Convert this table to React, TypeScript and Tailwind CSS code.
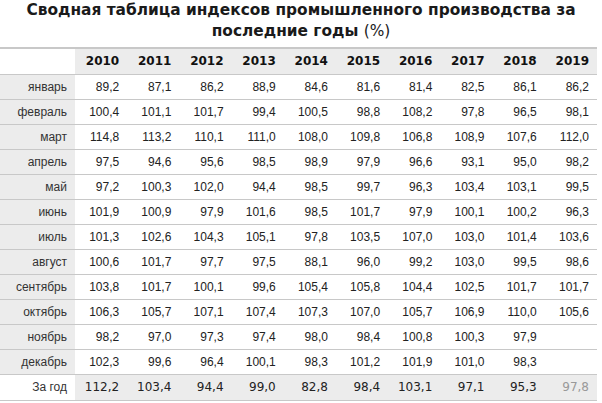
import React from "react";

type Row = { month: string; values: (string | null)[] };

const years = ["2010", "2011", "2012", "2013", "2014", "2015", "2016", "2017", "2018", "2019"];

const rows: Row[] = [
  { month: "январь", values: ["89,2", "87,1", "86,2", "88,9", "84,6", "81,6", "81,4", "82,5", "86,1", "86,2"] },
  { month: "февраль", values: ["100,4", "101,1", "101,7", "99,4", "100,5", "98,8", "108,2", "97,8", "96,5", "98,1"] },
  { month: "март", values: ["114,8", "113,2", "110,1", "111,0", "108,0", "109,8", "106,8", "108,9", "107,6", "112,0"] },
  { month: "апрель", values: ["97,5", "94,6", "95,6", "98,5", "98,9", "97,9", "96,6", "93,1", "95,0", "98,2"] },
  { month: "май", values: ["97,2", "100,3", "102,0", "94,4", "98,5", "99,7", "96,3", "103,4", "103,1", "99,5"] },
  { month: "июнь", values: ["101,9", "100,9", "97,9", "101,6", "98,5", "101,7", "97,9", "100,1", "100,2", "96,3"] },
  { month: "июль", values: ["101,3", "102,6", "104,3", "105,1", "97,8", "103,5", "107,0", "103,0", "101,4", "103,6"] },
  { month: "август", values: ["100,6", "101,7", "97,7", "97,5", "88,1", "96,0", "99,2", "103,0", "99,5", "98,6"] },
  { month: "сентябрь", values: ["103,8", "101,7", "100,1", "99,6", "105,4", "105,8", "104,4", "102,5", "101,7", "101,7"] },
  { month: "октябрь", values: ["106,3", "105,7", "107,1", "107,4", "107,3", "107,0", "105,7", "106,9", "110,0", "105,6"] },
  { month: "ноябрь", values: ["98,2", "97,0", "97,3", "97,4", "98,0", "98,4", "100,8", "100,3", "97,9", null] },
  { month: "декабрь", values: ["102,3", "99,6", "96,4", "100,1", "98,3", "101,2", "101,9", "101,0", "98,3", null] },
];

const totals = ["112,2", "103,4", "94,4", "99,0", "82,8", "98,4", "103,1", "97,1", "95,3", "97,8"];

export default function App() {
  return (
    <div className="w-[602px] h-[403px] bg-white overflow-hidden font-['Liberation_Sans',Arial,sans-serif] text-[#222]">
      {/* заголовок */}
      <h1 className="text-center font-['DejaVu_Sans',Verdana,sans-serif] text-[15.4px] font-bold leading-[21px] text-[#1a1a1a] mb-[5px]">
        Сводная таблица индексов промышленного производства за
        <br />
        последние годы <span className="font-normal">(%)</span>
      </h1>

      <table className="w-[597px] table-fixed border-collapse">
        <colgroup>
          <col className="w-[75px]" />
          {years.map((y) => (
            <col key={y} />
          ))}
        </colgroup>
        <thead>
          <tr className="h-[26px] border-t-2 border-b border-[#c8c8c8]">
            <th className="bg-white" />
            {years.map((y) => (
              <th
                key={y}
                className="bg-[#ececec] text-right pr-[8px] font-['DejaVu_Sans',Verdana,sans-serif] text-[12px] font-bold text-[#111]"
              >
                {y}
              </th>
            ))}
          </tr>
        </thead>
        <tbody>
          {rows.map((r) => (
            <tr key={r.month} className="h-[25px] border-b border-[#c8c8c8]">
              <td className="bg-[#ececec] text-right pr-[8px] text-[12px] text-[#333]">{r.month}</td>
              {r.values.map((v, i) => (
                <td key={i} className="text-right pr-[8px] text-[12px] text-[#222]">
                  {v ?? ""}
                </td>
              ))}
            </tr>
          ))}
          <tr className="h-[26px] border-b border-[#c8c8c8]">
            <td className="bg-white text-right pr-[8px] text-[12px] text-[#333]">За год</td>
            {totals.map((v, i) => (
              <td
                key={i}
                className={`bg-[#ececec] text-right pr-[8px] font-['DejaVu_Sans',Verdana,sans-serif] text-[12px] ${
                  i === totals.length - 1 ? "text-[#999]" : "text-[#222]"
                }`}
              >
                {v}
              </td>
            ))}
          </tr>
        </tbody>
      </table>
    </div>
  );
}
